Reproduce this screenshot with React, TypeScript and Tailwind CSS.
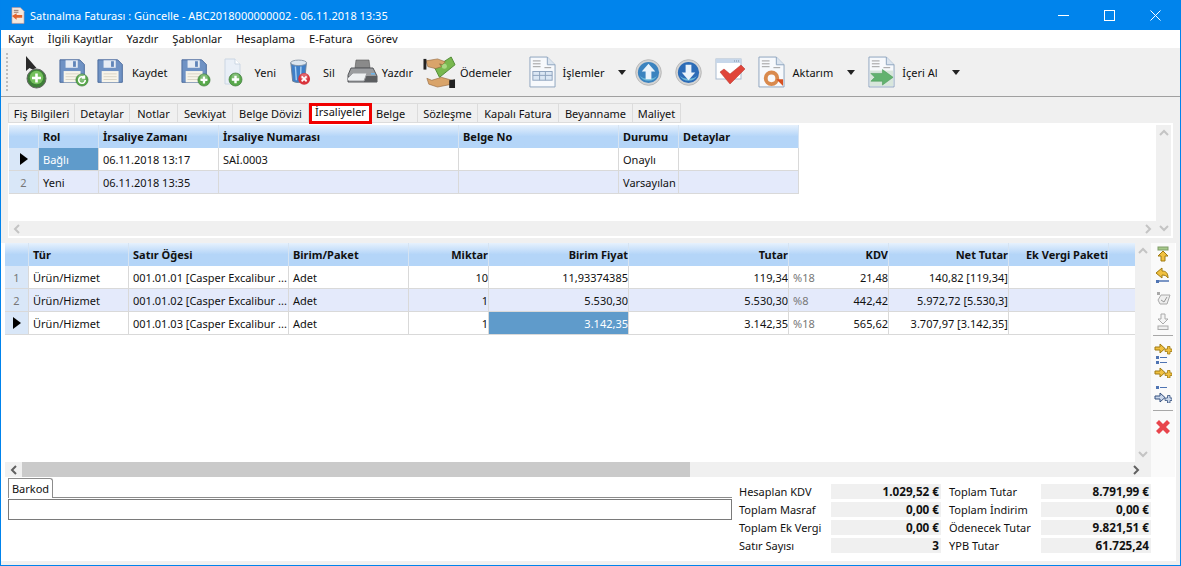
import { ReactNode } from "react";

const font = "font-['Noto_Sans',sans-serif]";

function Badge({ kind, x = 18, y = 18 }: { kind: "plus" | "refresh" | "x"; x?: number; y?: number }) {
  const fill = kind === "x" ? "#d9343c" : "#58a84a";
  return (
    <g transform={`translate(${x} ${y})`}>
      <circle cx="6.5" cy="6.5" r="6.5" fill={fill} stroke="#3d7a3a" strokeWidth={kind === "x" ? 0 : 0.7} />
      <circle cx="6.5" cy="4.5" r="4" fill="#fff" opacity="0.25" />
      {kind === "plus" && <path d="M6.5 2.800v7.400M2.800 6.500h7.400" stroke="#fff" strokeWidth="2.400" />}
      {kind === "x" && <path d="M3.800 3.800l5.400 5.400M9.200 3.800l-5.400 5.400" stroke="#fff" strokeWidth="2" />}
      {kind === "refresh" && (
        <path d="M10 6.500a3.500 3.500 0 1 1-1.200-2.600M9 1.800v2.600H6.400" fill="none" stroke="#fff" strokeWidth="1.700" />
      )}
    </g>
  );
}

function Floppy({ badge }: { badge?: "plus" | "refresh" }) {
  return (
    <svg width="30" height="32" viewBox="0 0 32 32">
      <path d="M1 3h21l5 5v19H1z" fill="#6f92c4" stroke="#47689a" />
      <rect x="7" y="3.500" width="13" height="8" fill="#e6ecf4" />
      <rect x="15" y="4.500" width="3" height="6" fill="#5f84b8" />
      <rect x="5" y="15" width="18" height="12" fill="#f7f4ea" />
      <path d="M7 18h14M7 21h14M7 24h14" stroke="#d8d3c4" />
      {badge && <Badge kind={badge} x={18} y={18} />}
    </svg>
  );
}

function Cursor() {
  return (
    <svg width="22" height="33" viewBox="0 0 22 33">
      <path d="M1 0v15l3.500-3 3 1.500 4-1.500z" fill="#2a2a2a" />
      <circle cx="11.500" cy="22.500" r="9.500" fill="#3e7f38" stroke="#666" />
      <circle cx="11.500" cy="21.500" r="6.800" fill="#74c05c" />
      <path d="M11.500 17.500v9M7 22h9" stroke="#fff" strokeWidth="2.600" />
    </svg>
  );
}

function NewDoc() {
  return (
    <svg width="20" height="29" viewBox="0 0 20 29">
      <path d="M2 1h10l5 5v20H2z" fill="#e9eff7" stroke="#cbd6e3" />
      <path d="M12 1v5h5" fill="#fff" stroke="#cbd6e3" />
      <Badge kind="plus" x={6} y={15} />
    </svg>
  );
}

function Trash() {
  return (
    <svg width="22" height="28" viewBox="0 0 24 30">
      <path d="M2 5l2 20c3 2 10 2 13 0l2-20z" fill="#3f7fc8" stroke="#6b7f95" />
      <ellipse cx="10.500" cy="5" rx="8.700" ry="3" fill="#dce6ef" stroke="#8595a5" />
      <path d="M7 9l1 15M13 9l-.5 15" stroke="#a6d0f3" strokeWidth="1.500" />
      <Badge kind="x" x={10} y={16} />
    </svg>
  );
}

function Printer() {
  return (
    <svg width="32" height="26" viewBox="0 0 32 26">
      <path d="M10 1h13l1 8H9z" fill="#8a8a8a" stroke="#555" strokeWidth=".6" />
      <path d="M5 9h22l4 8v6H2v-7z" fill="#9b9da0" stroke="#55575a" />
      <path d="M2 17h29v6H2z" fill="#5c5e61" />
      <path d="M1 20l6-6h14l-3 8H3z" fill="#eef0f2" stroke="#9a9ca0" />
      <rect x="25" y="14" width="4" height="1.600" fill="#6fb4e8" />
    </svg>
  );
}

function Money() {
  return (
    <svg width="33" height="33" viewBox="0 0 34 34">
      <path d="M12 12l17-11 4 8-16 13z" fill="#79b84f" stroke="#4f8a35" />
      <circle cx="22" cy="10.500" r="2.600" fill="#a9d983" />
      <path d="M3 5l12-2 8 3-3 3-3-1 2 3-6 2-8-2z" fill="#d9a46a" stroke="#8f6238" strokeWidth=".6" />
      <rect x="0.500" y="3" width="3" height="11" fill="#222" />
      <path d="M30 25l-11-3-10 3-5-2 2 6 9 3 15-3z" fill="#d9a46a" stroke="#8f6238" strokeWidth=".6" />
      <path d="M27 25l6-1v9h-6z" fill="#222" />
    </svg>
  );
}

function DocBase({ children }: { children: ReactNode }) {
  return (
    <svg width="27" height="32" viewBox="0 0 28 33">
      <path d="M1 1h18l8 8v23H1z" fill="#f7f9fc" stroke="#8ea3bd" />
      <path d="M19 1v8h8" fill="#dbe4ef" stroke="#8ea3bd" />
      <path d="M4 5h8M4 8h8M4 11h8" stroke="#9b9b9b" />
      <path d="M16 12h7" stroke="#9b9b9b" />
      {children}
    </svg>
  );
}

function ArrowCircle({ down }: { down?: boolean }) {
  return (
    <svg width="27" height="27" viewBox="0 0 28 28">
      <circle cx="14" cy="14" r="13.300" fill="#d4d4d4" stroke="#b7b7b7" />
      <circle cx="14" cy="14" r="11" fill={down ? "#2c6cb7" : "#3b83bf"} />
      <path d="M5 17a10 6 0 0 0 18 0 10 10 0 0 1-18 0z" fill="#6bb8d8" />
      {down ? (
        <path d="M11 6h6v8h4l-7 8-7-8h4z" fill="#eaf3fb" />
      ) : (
        <path d="M14 5l7 8h-4v8h-6v-8H7z" fill="#eaf3fb" />
      )}
    </svg>
  );
}

function WindowCheck() {
  return (
    <svg width="31" height="28" viewBox="0 0 31 28">
      <rect x="1" y="1" width="25" height="20" fill="#fff" stroke="#a9bbd0" />
      <rect x="1" y="1" width="25" height="4" fill="#c7d7ea" />
      <path d="M19 3h5" stroke="#7a8fa8" strokeDasharray="1 1" />
      <path d="M5 14l4-3 6 5 11-9 4 4-15 15z" fill="#e0453a" stroke="#b3322b" strokeWidth=".5" />
    </svg>
  );
}

function Caret() {
  return (
    <svg width="8" height="5" viewBox="0 0 8 5">
      <path d="M0 0h8L4 5z" fill="#222" />
    </svg>
  );
}

function Tool({ icon, label, gap, ml, caret }: { icon: ReactNode; label?: string; gap?: string; ml: string; caret?: string }) {
  return (
    <div className={`flex items-center ${ml}`}>
      {icon}
      {label && <span className={gap}>{label}</span>}
      {caret && <span className={`flex ${caret}`}><Caret /></span>}
    </div>
  );
}

const tabs = [
  { name: "Fiş Bilgileri", w: "w-[67px] justify-center" },
  { name: "Detaylar", w: "w-[55px] justify-center" },
  { name: "Notlar", w: "w-[48px] justify-center" },
  { name: "Sevkiyat", w: "w-[55px] justify-center" },
  { name: "Belge Dövizi", w: "w-[76px] justify-center" },
  { name: "İrsaliyeler", w: "w-[63px] justify-center", active: true },
  { name: "Belge", w: "w-[46px] justify-start pl-[4px]" },
  { name: "Sözleşme", w: "w-[60px] justify-center" },
  { name: "Kapalı Fatura", w: "w-[81px] justify-center" },
  { name: "Beyanname", w: "w-[74px] justify-center" },
  { name: "Maliyet", w: "w-[48px] justify-center" },
];

const cell = "flex items-center pl-[4px] border-r border-b border-[#d9d9d9] whitespace-nowrap overflow-hidden";
const head = "flex items-center pl-[4px] border-r border-[#d5e3f2] font-bold whitespace-nowrap";
const headBg = "bg-gradient-to-b from-[#e6f1fd] via-[#b4d5f8] to-[#b4d5f8]";

function RowArrow() {
  return (
    <svg width="8" height="12" viewBox="0 0 8 12">
      <path d="M0 0l8 6-8 6z" fill="#000" />
    </svg>
  );
}

function RowNo({ n }: { n?: number }) {
  return (
    <div className="flex items-center justify-center bg-[#d9e7f8] border-r border-b border-[#d9d9d9] text-[#777]">
      {n ? n : <RowArrow />}
    </div>
  );
}

const topCols = "grid grid-cols-[30px_60px_120px_240px_160px_60px_120px] w-[790px]";
const gridCols = "grid grid-cols-[24px_100px_160px_120px_80px_140px_160px_100px_120px_100px_26px] w-[1130px]";

const lines = [
  { no: 1, item: "001.01.01 [Casper Excalibur ...", qty: "10", price: "11,93374385", total: "119,34", rate: "%18", kdv: "21,48", net: "140,82 [119,34]", bg: "bg-white" },
  { no: 2, item: "001.01.02 [Casper Excalibur ...", qty: "1", price: "5.530,30", total: "5.530,30", rate: "%8", kdv: "442,42", net: "5.972,72 [5.530,3]", bg: "bg-[#e4eafb]" },
  { item: "001.01.03 [Casper Excalibur ...", qty: "1", price: "3.142,35", total: "3.142,35", rate: "%18", kdv: "565,62", net: "3.707,97 [3.142,35]", bg: "bg-white", sel: true },
];

const totals = [
  ["Hesaplan KDV", "1.029,52 €", "Toplam Tutar", "8.791,99 €"],
  ["Toplam Masraf", "0,00 €", "Toplam İndirim", "0,00 €"],
  ["Toplam Ek Vergi", "0,00 €", "Ödenecek Tutar", "9.821,51 €"],
  ["Satır Sayısı", "3", "YPB Tutar", "61.725,24"],
];

function Chevron({ dir, dark }: { dir: "l" | "r" | "u" | "d"; dark?: boolean }) {
  const d = { l: "M7 1L3 5l4 4", r: "M3 1l4 4-4 4", u: "M1 7l4-4 4 4", d: "M1 3l4 4 4-4" }[dir];
  return (
    <svg width="10" height="10" viewBox="0 0 10 10">
      <path d={d} fill="none" stroke={dark ? "#606060" : "#c4c4c4"} strokeWidth="2" />
    </svg>
  );
}

function SideArrow({ color, edge, flip }: { color: string; edge: string; flip?: boolean }) {
  return (
    <svg width="18" height="18" viewBox="0 0 18 18">
      <rect x="2" y={flip ? 1 : 13} width="3" height="3" fill="#4f74b3" />
      <path d={flip ? "M6 2.500h7" : "M6 14.500h7"} stroke="#4f74b3" />
      <g transform={flip ? "translate(0 7)" : undefined}>
        <path d="M1 4h5V1l5 4.500L6 10V7H1z" fill={color} stroke={edge} />
        <path d="M11 6h2.500V3.500h2.500V6h2v2.500h-2V11h-2.500V8.500H11z" fill={color} stroke={edge} strokeWidth=".8" />
      </g>
    </svg>
  );
}

export default function App() {
  return (
    <div className={`${font} w-[1181px] h-[566px] flex flex-col overflow-hidden bg-[#f0f0f0] border-x border-b border-[#0083ec] text-[11px] leading-none text-[#111]`}>
      {/* TITLE BAR */}
      <div className="h-[30px] bg-[#0084ec] flex items-center text-white -mx-px shrink-0">
        <svg className="ml-[11px]" width="14" height="17" viewBox="0 0 15 17">
          <path d="M1 0h9l4 4v13H1z" fill="#f4e8de" stroke="#b88" strokeWidth=".6" />
          <path d="M3 3h5M3 5h5" stroke="#8d6e63" />
          <path d="M1 9l5-3v2h6v3H6v2z" fill="#e2622c" />
        </svg>
        <span className="ml-[5px]">Satınalma Faturası : Güncelle - ABC2018000000002 - 06.11.2018 13:35</span>
        <div className="ml-auto flex items-center mr-[20px] gap-[35px]">
          <svg width="11" height="11" viewBox="0 0 11 11"><path d="M0 5.500h11" stroke="#fff" /></svg>
          <svg width="11" height="11" viewBox="0 0 11 11"><rect x=".5" y=".5" width="10" height="10" fill="none" stroke="#fff" /></svg>
          <svg width="11" height="11" viewBox="0 0 11 11"><path d="M.5.500l10 10M10.500.500l-10 10" stroke="#fff" /></svg>
        </div>
      </div>

      {/* MENU */}
      <div className="h-[18px] bg-white flex items-center gap-[14px] pl-[7px] shrink-0 text-[11.2px]">
        {["Kayıt", "İlgili Kayıtlar", "Yazdır", "Şablonlar", "Hesaplama", "E-Fatura", "Görev"].map((m) => (
          <span key={m}>{m}</span>
        ))}
      </div>

      {/* TOOLBAR */}
      <div className="h-[49px] flex items-center border-b border-[#a0a0a0] shrink-0">
        <div className="ml-[5px] h-[38px] w-[2px] border-l-2 border-dotted border-[#bdbdbd]" />
        <Tool ml="ml-[17px]" icon={<Cursor />} />
        <Tool ml="ml-[12px]" icon={<Floppy badge="refresh" />} />
        <Tool ml="ml-[8px]" icon={<Floppy />} label="Kaydet" gap="ml-[5px]" />
        <Tool ml="ml-[13px]" icon={<Floppy badge="plus" />} />
        <Tool ml="ml-[12px]" icon={<NewDoc />} label="Yeni" gap="ml-[12px]" />
        <Tool ml="ml-[13px]" icon={<Trash />} label="Sil" gap="ml-[12px]" />
        <Tool ml="ml-[11px]" icon={<Printer />} label="Yazdır" gap="ml-[4px]" />
        <Tool ml="ml-[10px]" icon={<Money />} label="Ödemeler" gap="ml-[4px]" />
        <Tool ml="ml-[17px]" caret="ml-[13px]" label="İşlemler" gap="ml-[7px]" icon={
          <DocBase>
            <rect x="4" y="16" width="20" height="9" fill="#dbe7f4" stroke="#8ea3bd" />
            <path d="M4 20h20M11 16v9M17 16v9" stroke="#8ea3bd" />
          </DocBase>
        } />
        <Tool ml="ml-[9px]" icon={<ArrowCircle />} />
        <Tool ml="ml-[13px]" icon={<ArrowCircle down />} />
        <Tool ml="ml-[13px]" icon={<WindowCheck />} />
        <Tool ml="ml-[12px]" caret="ml-[14px]" label="Aktarım" gap="ml-[8px]" icon={
          <DocBase>
            <circle cx="14" cy="23" r="6" fill="none" stroke="#d98a4e" strokeWidth="4" />
            <path d="M19 24h7v7z" fill="#d8501f" />
          </DocBase>
        } />
        <Tool ml="ml-[13px]" caret="ml-[14px]" label="İçeri Al" gap="ml-[7px]" icon={
          <DocBase>
            <rect x="2" y="15" width="24" height="16" fill="#d8e6dc" />
            <path d="M3 18h12v-4l11 8-11 8v-4H3l4-4z" fill="#62b26f" stroke="#4a9a58" strokeWidth=".6" />
          </DocBase>
        } />
      </div>

      {/* TABS + WAYBILL GRID */}
      <div className="h-[146px] shrink-0 px-[7px] pb-[5px] flex flex-col">
        <div className="h-[26px] flex items-end relative">
          {tabs.map((t) =>
            t.active ? (
              <div key={t.name} className={`${t.w} h-[21px] -mb-px flex items-start pt-0 bg-white border-[3px] border-[#f00000] z-10`}>
                {t.name}
              </div>
            ) : (
              <div key={t.name} className={`${t.w} h-[20px] flex items-center border border-l-0 first:border-l border-[#dcdcdc] bg-[#f0f0f0]`}>
                {t.name}
              </div>
            )
          )}
        </div>
        <div className="flex-1 bg-white pl-px pt-[2px] pr-[2px] pb-[2px] flex min-h-0">
          <div className="flex-1 flex flex-col min-w-0">
            <div className="flex-1">
              <div className={`${topCols} h-[23px] ${headBg}`}>
                <div className={head} />
                <div className={head}>Rol</div>
                <div className={head}>İrsaliye Zamanı</div>
                <div className={head}>İrsaliye Numarası</div>
                <div className={head}>Belge No</div>
                <div className={head}>Durumu</div>
                <div className={head}>Detaylar</div>
              </div>
              <div className={`${topCols} h-[23px] bg-white`}>
                <RowNo />
                <div className={`${cell} bg-[#5f9bcb] text-white`}>Bağlı</div>
                <div className={cell}>06.11.2018 13:17</div>
                <div className={cell}>SAİ.0003</div>
                <div className={cell} />
                <div className={cell}>Onaylı</div>
                <div className={cell} />
              </div>
              <div className={`${topCols} h-[23px] bg-[#e4eafb]`}>
                <RowNo n={2} />
                <div className={cell}>Yeni</div>
                <div className={cell}>06.11.2018 13:35</div>
                <div className={cell} />
                <div className={cell} />
                <div className={cell}>Varsayılan</div>
                <div className={cell} />
              </div>
            </div>
            <div className="h-[15px] bg-[#f0f0f0] flex items-center justify-between px-[3px]">
              <Chevron dir="l" />
              <Chevron dir="r" />
            </div>
          </div>
          <div className="w-[15px] bg-[#f0f0f0] flex flex-col items-center justify-between py-[3px]">
            <Chevron dir="u" />
            <Chevron dir="d" />
          </div>
        </div>
      </div>

      {/* LINES GRID */}
      <div className="flex-1 bg-white mr-[4px] pl-[4px] flex flex-col min-h-0">
        <div className="h-[234px] flex shrink-0">
          <div className="w-[1146px] flex flex-col">
            <div className="flex-1 flex min-h-0">
              <div className="w-[1130px]">
                <div className={`${gridCols} h-[23px] ${headBg}`}>
                  <div className={head} />
                  <div className={head}>Tür</div>
                  <div className={head}>Satır Öğesi</div>
                  <div className={head}>Birim/Paket</div>
                  <div className={`${head} justify-end`}>Miktar</div>
                  <div className={`${head} justify-end`}>Birim Fiyat</div>
                  <div className={`${head} justify-end`}>Tutar</div>
                  <div className={`${head} justify-end`}>KDV</div>
                  <div className={`${head} justify-end`}>Net Tutar</div>
                  <div className={`${head} justify-end`}>Ek Vergi Paketi</div>
                  <div />
                </div>
                {lines.map((l) => (
                  <div key={l.item} className={`${gridCols} h-[23px] ${l.bg}`}>
                    <RowNo n={l.no} />
                    <div className={cell}>Ürün/Hizmet</div>
                    <div className={cell}>{l.item}</div>
                    <div className={cell}>Adet</div>
                    <div className={`${cell} justify-end`}>{l.qty}</div>
                    <div className={`${cell} justify-end ${l.sel ? "bg-[#5f9bcb] text-white" : ""}`}>{l.price}</div>
                    <div className={`${cell} justify-end`}>{l.total}</div>
                    <div className={`${cell} justify-between`}>
                      <span className="text-[#777]">{l.rate}</span>
                      <span>{l.kdv}</span>
                    </div>
                    <div className={`${cell} justify-end`}>{l.net}</div>
                    <div className={cell} />
                    <div className="border-b border-[#d9d9d9]" />
                  </div>
                ))}
              </div>
              <div className="w-[16px] bg-[#f0f0f0] flex flex-col items-center justify-between py-[3px]">
                <Chevron dir="u" />
                <Chevron dir="d" />
              </div>
            </div>
            <div className="h-[15px] bg-[#f0f0f0] flex items-center shrink-0">
              <div className="w-[17px] flex justify-center"><Chevron dir="l" dark /></div>
              <div className="w-[668px] h-full bg-[#cacaca]" />
              <div className="ml-auto w-[30px] flex justify-center"><Chevron dir="r" dark /></div>
            </div>
          </div>
          <div className="w-[24px] flex flex-col items-center bg-[#fafafa] pt-[2px]">
            <svg className="mt-[1px]" width="18" height="18" viewBox="0 0 18 18">
              <rect x="4" y="1" width="10" height="3" fill="#a6c98a" stroke="#7f9c68" />
              <path d="M9 5l5 5h-3v5H7v-5H4z" fill="#f0c040" stroke="#a07a10" />
            </svg>
            <svg className="mt-[3px]" width="18" height="18" viewBox="0 0 18 18">
              <path d="M8 1l-6 5 6 5V8c3 0 5 1 6 3 0-5-2-7-6-7z" fill="#f0c040" stroke="#a07a10" />
              <path d="M4 14h11" stroke="#4f74b3" strokeWidth="1.500" />
              <rect x="2" y="13" width="3" height="3" fill="#4f74b3" />
            </svg>
            <svg className="mt-[6px]" width="18" height="18" viewBox="0 0 18 18">
              <rect x="3" y="1" width="3" height="3" fill="#aaa" />
              <path d="M7 4h9l-3 9H6l-2-4z" fill="#eee" stroke="#aaa" />
              <path d="M7 9l3 2 3-5" fill="none" stroke="#999" />
            </svg>
            <svg className="mt-[4px]" width="18" height="18" viewBox="0 0 18 18">
              <path d="M7 1h4v5h3l-5 5-5-5h3z" fill="#f4f4f4" stroke="#aaa" />
              <rect x="4" y="13" width="10" height="3.500" fill="#eee" stroke="#aaa" />
            </svg>
            <div className="w-[20px] h-[1px] bg-[#a8a8a8] mt-[4px]" />
            <div className="mt-[7px] flex"><SideArrow color="#f0c040" edge="#a07a10" /></div>
            <div className="mt-[-1px] flex"><SideArrow color="#f0c040" edge="#a07a10" flip /></div>
            <div className="mt-[7px] flex"><SideArrow color="#c9d6ea" edge="#35507f" flip /></div>
            <div className="w-[20px] h-[1px] bg-[#a8a8a8] mt-[7px]" />
            <svg className="mt-[9px]" width="14" height="14" viewBox="0 0 14 14">
              <path d="M3 0l4 4 4-4 3 3-4 4 4 4-3 3-4-4-4 4-3-3 4-4-4-4z" fill="#e8454c" />
            </svg>
          </div>
        </div>

        {/* BOTTOM */}
        <div className="flex-1 flex min-h-0">
          <div className="w-[727px] pl-[3px] pt-px flex flex-col">
            <div className="h-[20px] flex border-b border-[#8c8c8c]">
              <div className="w-[45px] h-[20px] flex items-center justify-center border border-b-0 border-[#8c8c8c] rounded-tr-[3px] bg-white">Barkod</div>
            </div>
            <div className="h-[21px] mt-px border-[1.5px] border-[#7a7a7a] bg-white" />
          </div>
          <div className="ml-[7px] pt-[7px] flex flex-col gap-[3px]">
            {totals.map((t) => (
              <div key={t[0]} className="flex h-[15px] items-center">
                <span className="w-[92px]">{t[0]}</span>
                <span className="w-[110px] h-full bg-[#f0f0f0] flex items-center justify-end pr-[2px] font-bold text-[11.7px]">{t[1]}</span>
                <span className="w-[100px] pl-[8px]">{t[2]}</span>
                <span className="w-[110px] h-full bg-[#f0f0f0] flex items-center justify-end pr-[2px] font-bold text-[11.7px]">{t[3]}</span>
              </div>
            ))}
          </div>
        </div>
      </div>
      <div className="h-[4px] shrink-0" />
    </div>
  );
}
